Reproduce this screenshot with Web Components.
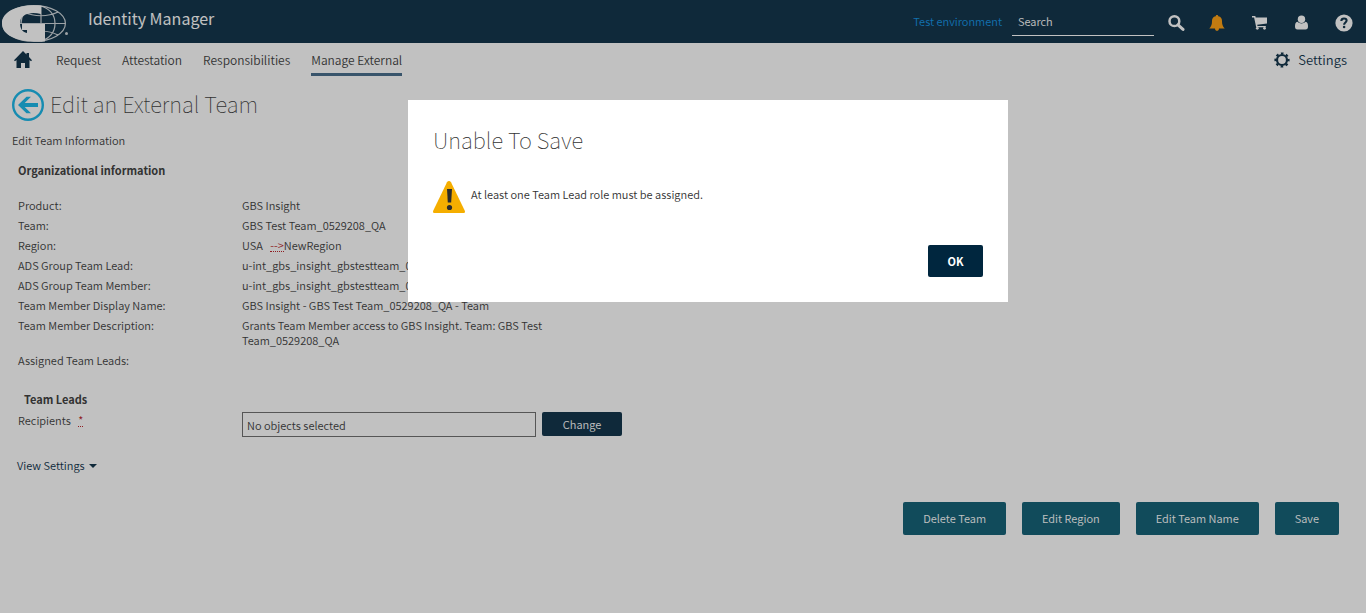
<!DOCTYPE html>
<html lang="en">
<head>
<meta charset="utf-8">
<title>Identity Manager</title>
<style>
  :root {
    --navy: #00263e;
    --teal: #03566e;
    --sky: #0bb3e9;
    --ink: #333;
  }
  body {
    margin: 0;
    background: #fff;
    color: var(--ink);
    font: 350 11px/15px "Noto Sans CJK SC", "Noto Sans", sans-serif;
  }
</style>
</head>
<body>
<identity-app></identity-app>

<script>
const define = (name, html) => {
  const template = document.createElement('template');
  template.innerHTML = html;
  customElements.define(name, class extends HTMLElement {
    constructor() {
      super();
      this.attachShadow({ mode: 'open' }).append(template.content.cloneNode(true));
    }
  });
};

define('globe-logo', `
  <style>:host { display: block; width: 68px; height: 37px; } svg { display: block; }</style>
  <svg width="68" height="37" viewBox="0 0 68 37" role="img" aria-label="Company logo">
    <g fill="none" stroke="#fff" stroke-opacity=".8" stroke-width="1.200">
      <ellipse cx="32" cy="18.500" rx="31.400" ry="17.900"/>
      <path d="M39 1v35M18 18.500h45M22 7c10 5 24 5 34 0M24 30c10-5 22-5 32 0M32 1c-9 4-13 10-13 17.500M39 1c9 3 14 9 14 17.500S48 33 39 36"/>
    </g>
    <path fill="#fff" d="M39 .6V9C27 6 18 10 18 18c0 5 2 9 7 10v-3h-5v-6h23v17.500C17 38 0 31 0 18.500S17-1 39 .6z"/>
    <circle cx="64.500" cy="28.500" r="1.500" fill="#fff" fill-opacity=".8"/>
  </svg>`);

define('app-icon-link', `
  <style>
    :host { display: block; }
    a { display: flex; color: inherit; }
  </style>
  <a href="#"><slot></slot></a>`);

define('app-header', `
  <style>
    :host {
      display: flex; align-items: center; height: 43px; box-sizing: border-box;
      padding: 0 13px 0 2px; background: var(--navy); color: #fff;
    }
    globe-logo { margin: 4px 18px 0 0; }
    h1 { margin: 0 auto 8px 0; font-size: 16px; line-height: 24px; font-weight: 400; }
    .env { color: #048de3; text-decoration: none; margin-right: 10px; }
    input {
      box-sizing: border-box; width: 142px; height: 28px; margin: 0 14px 0 0; padding: 0 6px;
      border: 0; border-bottom: 1px solid #fff; border-radius: 0;
      background: none; color: #fff; font: inherit; outline: none;
    }
    input::placeholder { color: #fff; opacity: 1; }
    nav { display: flex; align-items: center; gap: 26px; padding-top: 2px; }
    svg { display: block; }
    .find { margin-right: -2px; }
    .bell { color: #ff9b03; }
  </style>
  <globe-logo></globe-logo>
  <h1>Identity Manager</h1>
  <a class="env" href="#">Test environment</a>
  <input type="text" placeholder="Search" aria-label="Search">
  <nav aria-label="Tools">
    <app-icon-link class="find"><svg width="17" height="16" viewBox="0 0 17 16" role="img" aria-label="Find"><circle cx="6.400" cy="6.200" r="4.900" fill="none" stroke="currentColor" stroke-width="2.500"/><path d="M10 9.800l5 4.600" stroke="currentColor" stroke-width="3" stroke-linecap="round"/></svg></app-icon-link>
    <app-icon-link class="bell"><svg width="16" height="16" viewBox="0 0 16 16" role="img" aria-label="Notifications"><path fill="currentColor" d="M8 0c.8 0 1.200.500 1.300 1.200C12 1.700 13 3.600 13 6c0 3.500.8 5.600 2.700 7.400H10c0 1.400-.9 2.300-2 2.300s-2-.9-2-2.300H.3C2.200 11.600 3 9.500 3 6c0-2.400 1-4.300 3.700-4.800C6.800.5 7.200 0 8 0z"/></svg></app-icon-link>
    <app-icon-link><svg width="17" height="15" viewBox="0 0 17 15" role="img" aria-label="Cart"><path fill="currentColor" d="M1 1h3.300l.4 1.500H16v6L6.200 9.700l.3 1.200h8.300v1.400H5.200L3.100 2.500H1z"/><circle cx="6.300" cy="13.300" r="1.400" fill="currentColor"/><circle cx="13.500" cy="13.300" r="1.400" fill="currentColor"/></svg></app-icon-link>
    <app-icon-link><svg width="15" height="15" viewBox="0 0 15 15" role="img" aria-label="Profile"><path fill="currentColor" d="M3.500 6.800C1.500 7.300 1 9 1 11.500 1 13.500 1.800 14.500 3.500 14.500h8c1.700 0 2.500-1 2.500-3 0-2.500-.5-4.200-2.500-4.700C10.500 8 9 8.400 7.500 8.400S4.500 8 3.500 6.800z"/><circle cx="7.500" cy="4.200" r="3.700" fill="currentColor"/></svg></app-icon-link>
    <app-icon-link><svg width="18" height="18" viewBox="0 0 18 18" role="img" aria-label="Help"><circle cx="9" cy="9" r="8.600" fill="currentColor"/><path d="M6.300 7c.1-1.600 1.100-2.500 2.700-2.500s2.600.8 2.600 2.100c0 1.800-2.500 2-2.500 4.100" fill="none" stroke="#00263e" stroke-width="2.100"/><circle cx="9.100" cy="13" r="1.300" fill="#00263e"/></svg></app-icon-link>
  </nav>`);

define('nav-item', `
  <style>
    :host { display: block; }
    a { display: block; padding-bottom: 4px; border-bottom: 3px solid transparent; color: inherit; text-decoration: none; }
    :host([current]) a { border-color: #3b6385; }
  </style>
  <a href="#"><slot></slot></a>`);

define('app-nav', `
  <style>
    :host { display: flex; align-items: flex-start; padding: 8px 19px 0 14px; height: 38px; box-sizing: border-box; font-size: 12px; line-height: 18px; }
    .home { margin-right: 24px; color: var(--navy); }
    nav { display: flex; gap: 21px; margin-right: auto; }
    .settings { display: flex; align-items: center; gap: 8px; color: var(--navy); font-size: 13px; text-decoration: none; }
    svg { display: block; }
  </style>
  <app-icon-link class="home"><svg width="18" height="18" viewBox="0 0 18 18" role="img" aria-label="Home"><path fill="currentColor" d="M9 0l3.500 3.500V2H15v4l3 3.200-1 1L15.500 9v8H11v-5H7v5H2.500V9L1 10.200l-1-1z"/></svg></app-icon-link>
  <nav aria-label="Main">
    <nav-item>Request</nav-item>
    <nav-item>Attestation</nav-item>
    <nav-item>Responsibilities</nav-item>
    <nav-item current>Manage External</nav-item>
  </nav>
  <a class="settings" href="#"><svg width="16" height="16" viewBox="0 0 16 16" aria-hidden="true"><circle cx="8" cy="8" r="5" fill="none" stroke="currentColor" stroke-width="2.200"/><circle cx="8" cy="8" r="6.600" fill="none" stroke="currentColor" stroke-width="2" stroke-dasharray="2.600 2.584" stroke-dashoffset="1.300"/></svg>Settings</a>`);

define('page-title', `
  <style>
    :host { display: flex; align-items: flex-start; gap: 6px; }
    a { color: var(--sky); }
    svg { display: block; }
    h2 { margin: 0; font-size: 22px; line-height: 28px; font-weight: 100; }
  </style>
  <a href="#" aria-label="Back"><svg width="32" height="32" viewBox="0 0 32 32" aria-hidden="true"><circle cx="16" cy="16" r="14.800" fill="none" stroke="currentColor" stroke-width="2.400"/><path fill="currentColor" d="M6 16l8.500-8.300H19L12.700 14H26v4H12.700l6.300 6.300h-4.500z"/></svg></a>
  <h2><slot></slot></h2>`);

define('info-row', `
  <style>
    :host { display: grid; grid-template-columns: 224px 310px; padding-bottom: 5px; }
  </style>
  <span><slot name="label"></slot></span>
  <span><slot></slot></span>`);

define('changed-mark', `
  <style>
    :host { display: inline; }
    span { color: #b8141a; border-bottom: 1px dotted #b8141a; line-height: 12px; display: inline-block; }
  </style>
  <span><slot></slot></span>`);

define('app-button', `
  <style>
    :host { display: block; }
    button {
      display: block; height: 33px; padding: 0 20px; border: 0; border-radius: 2px;
      background: var(--teal); color: #fff; font: inherit; cursor: pointer;
    }
    :host([kind=field]) button { height: 24px; width: 80px; padding: 0; background: var(--navy); }
    :host([kind=primary]) button { height: 32px; width: 55px; padding: 0; background: var(--navy); font-weight: 700; }
  </style>
  <button type="button"><slot></slot></button>`);

define('recipient-field', `
  <style>
    :host { display: grid; grid-template-columns: 224px 294px auto; align-items: start; justify-content: start; }
    label { padding-top: 1px; }
    changed-mark { margin-left: 5px; }
    input {
      box-sizing: border-box; width: 100%; height: 25px; margin: 0; padding: 0 4px;
      border: 1px solid #666; border-radius: 0; background: #fff; color: inherit; font: inherit;
    }
    app-button { margin-left: 6px; }
  </style>
  <label for="recipients">Recipients <changed-mark>*</changed-mark></label>
  <input id="recipients" type="text" value="No objects selected" readonly>
  <app-button kind="field">Change</app-button>`);

define('team-form', `
  <style>
    :host { display: block; padding: 8px 27px 0 12px; }
    .intro { margin: 12px 0 15px; }
    section { padding-left: 6px; }
    h3 { margin: 0; font-size: 11px; line-height: 15px; font-weight: 700; }
    .rows { padding: 20px 0 19px; }
    .leads { padding: 0 0 5px 6px; }
    .view {
      display: flex; align-items: center; gap: 4px; margin: 21px 0 29px 5px; padding: 0;
      border: 0; background: none; color: var(--navy); font: inherit;
    }
    .actions { display: flex; justify-content: flex-end; gap: 16px; }
  </style>
  <page-title>Edit an External Team</page-title>
  <p class="intro">Edit Team Information</p>
  <section>
    <h3>Organizational information</h3>
    <div class="rows">
      <info-row><span slot="label">Product:</span>GBS Insight</info-row>
      <info-row><span slot="label">Team:</span>GBS Test Team_0529208_QA</info-row>
      <info-row><span slot="label">Region:</span>USA &nbsp;<changed-mark>--&gt;</changed-mark>NewRegion</info-row>
      <info-row><span slot="label">ADS Group Team Lead:</span>u-int_gbs_insight_gbstestteam_0529208</info-row>
      <info-row><span slot="label">ADS Group Team Member:</span>u-int_gbs_insight_gbstestteam_0529208</info-row>
      <info-row><span slot="label">Team Member Display Name:</span>GBS Insight - GBS Test Team_0529208_QA - Team</info-row>
      <info-row><span slot="label">Team Member Description:</span>Grants Team Member access to GBS Insight. Team: GBS Test Team_0529208_QA</info-row>
      <info-row><span slot="label">Assigned Team Leads:</span></info-row>
    </div>
    <h3 class="leads">Team Leads</h3>
    <recipient-field></recipient-field>
  </section>
  <button class="view" type="button">View Settings <svg width="8" height="4" viewBox="0 0 8 4" aria-hidden="true"><path fill="currentColor" d="M0 0h8L4 4z"/></svg></button>
  <div class="actions">
    <app-button>Delete Team</app-button>
    <app-button>Edit Region</app-button>
    <app-button>Edit Team Name</app-button>
    <app-button>Save</app-button>
  </div>`);

define('message-dialog', `
  <style>
    :host {
      position: fixed; inset: 0; display: flex; align-items: flex-start; justify-content: center;
      box-sizing: border-box; padding: 100px 0 0 50px; background: rgba(51, 51, 51, .3);
    }
    dialog {
      position: static; display: block; box-sizing: border-box; width: 600px; margin: 0; padding: 25px;
      border: 0; background: #fff; color: var(--ink);
    }
    h2 { margin: 0 0 28px; font-size: 22px; line-height: 28px; font-weight: 100; }
    .message { display: flex; gap: 6px; }
    .message p { margin: 6px 0 0; }
    svg { display: block; }
    .footer { display: flex; justify-content: flex-end; padding-top: 32px; }
  </style>
  <dialog open aria-labelledby="title">
    <h2 id="title"><slot name="title"></slot></h2>
    <div class="message">
      <svg width="32" height="32" viewBox="0 0 32 32" role="img" aria-label="Warning"><path fill="#f5ae00" d="M14 1.200c.9-1.600 3.100-1.600 4 0l13.800 28.600c.5 1.200 0 2.200-1.400 2.200H1.600C.2 32-.3 31 .2 29.800z"/><path fill="#2b2b2b" d="M14 8h5l-.8 13.500h-3.400z"/><circle cx="16.500" cy="26.500" r="2.600" fill="#2b2b2b"/></svg>
      <p><slot></slot></p>
    </div>
    <div class="footer"><app-button kind="primary">OK</app-button></div>
  </dialog>`);

define('identity-app', `
  <style>:host { display: block; }</style>
  <app-header></app-header>
  <app-nav></app-nav>
  <team-form></team-form>
  <message-dialog><span slot="title">Unable To Save</span>At least one Team Lead role must be assigned.</message-dialog>`);
</script>
</body>
</html>
